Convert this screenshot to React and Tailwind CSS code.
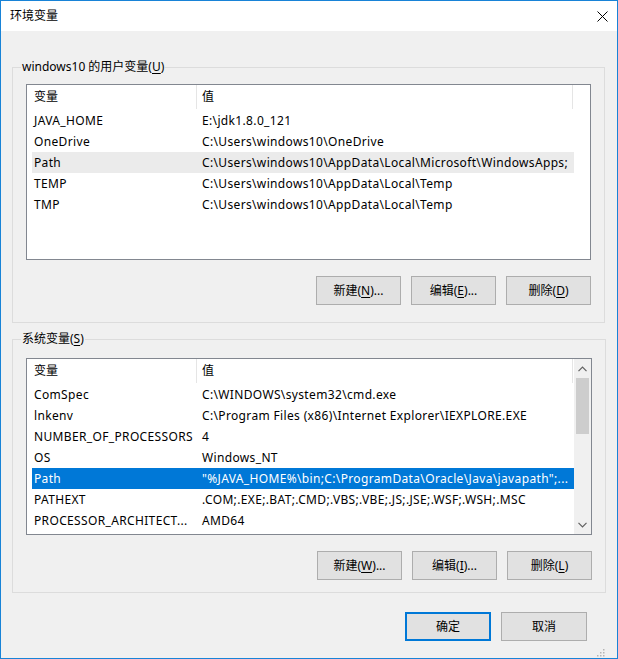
import React from "react";

const font = {
  fontFamily: '"Noto Sans", "Noto Sans CJK SC", sans-serif',
};

const userVars = [
  ["JAVA_HOME", "E:\\jdk1.8.0_121"],
  ["OneDrive", "C:\\Users\\windows10\\OneDrive"],
  ["Path", "C:\\Users\\windows10\\AppData\\Local\\Microsoft\\WindowsApps;"],
  ["TEMP", "C:\\Users\\windows10\\AppData\\Local\\Temp"],
  ["TMP", "C:\\Users\\windows10\\AppData\\Local\\Temp"],
];

const sysVars = [
  ["ComSpec", "C:\\WINDOWS\\system32\\cmd.exe"],
  ["lnkenv", "C:\\Program Files (x86)\\Internet Explorer\\IEXPLORE.EXE"],
  ["NUMBER_OF_PROCESSORS", "4"],
  ["OS", "Windows_NT"],
  ["Path", "\"%JAVA_HOME%\\bin;C:\\ProgramData\\Oracle\\Java\\javapath\";..."],
  ["PATHEXT", ".COM;.EXE;.BAT;.CMD;.VBS;.VBE;.JS;.JSE;.WSF;.WSH;.MSC"],
  ["PROCESSOR_ARCHITECT...", "AMD64"],
];

const Btn = ({ label, hot, tail = "", wide = false, primary = false }) => (
  <button
    className={`h-[29px] ${wide ? "w-[86px]" : "w-[85px]"} bg-[#e1e1e1] text-[12px] text-black ${
      primary ? "border-2 border-[#0078d7]" : "border border-[#adadad]"
    }`}
  >
    {label}
    {hot && (
      <>
        (<span className="underline underline-offset-2">{hot}</span>)
      </>
    )}
    {tail}
  </button>
);

const Header = () => (
  <div className="flex h-[24px] items-center text-[12px] text-black">
    <div className="w-[170px] pl-[7px] h-full flex items-center border-r border-[#e5e5e5]">变量</div>
    <div className="w-[376px] pl-[5px] h-full flex items-center border-r border-[#e5e5e5]">值</div>
  </div>
);

const Row = ({ name, value, state }) => (
  <div
    className={`ml-[5px] w-[542px] h-[21px] flex items-center text-[12px] tracking-[0.35px] ${
      state === "sel"
        ? "bg-[#0078d7] text-white"
        : state === "hover"
        ? "bg-[#ebebeb] text-black"
        : "text-black"
    }`}
  >
    <div className="w-[168px] pl-[2px] whitespace-nowrap overflow-hidden">{name}</div>
    <div className="pl-[2px] whitespace-nowrap">{value}</div>
  </div>
);

const Chevron = ({ down }) => (
  <svg width="9" height="6" viewBox="0 0 9 6" className="text-[#606060]">
    <path
      d={down ? "M0.5 0.8 L4.5 4.8 L8.5 0.8" : "M0.5 5.2 L4.5 1.2 L8.5 5.2"}
      fill="none"
      stroke="currentColor"
      strokeWidth="1.2"
    />
  </svg>
);

export default function App() {
  return (
    <div
      style={font}
      className="w-[618px] h-[659px] border border-[#1883d7] bg-[#f0f0f0] flex flex-col overflow-hidden"
    >
      {/* title bar */}
      <div className="h-[30px] bg-white flex items-center justify-between pl-[9px] pr-[9px] shrink-0">
        <span className="text-[12px] text-black">环境变量</span>
        <svg width="11" height="11" viewBox="0 0 11 11">
          <path d="M0.5 0.5 L10.5 10.5 M10.5 0.5 L0.5 10.5" stroke="#000" strokeWidth="1" />
        </svg>
      </div>

      <div className="flex-1 flex flex-col pl-[11px] pr-[12px] pt-[28px]">
        {/* user variables */}
        <fieldset className="border border-[#dcdcdc] px-[13px] pb-[17px] pt-[9px]">
          <legend className="ml-[-5px] px-[1px] text-[12px] leading-[16px] text-black">
            windows10 的用户变量(<span className="underline underline-offset-2">U</span>)
          </legend>
          <div className="h-[176px] bg-white border border-[#828790]">
            <Header />
            <div className="mt-px">
              {userVars.map(([n, v]) => (
                <Row key={n} name={n} value={v} state={n === "Path" ? "hover" : ""} />
              ))}
            </div>
          </div>
          <div className="mt-[16px] flex justify-end gap-[10px]">
            <Btn label="新建" hot="N" tail="..." />
            <Btn label="编辑" hot="E" tail="..." />
            <Btn label="删除" hot="D" />
          </div>
        </fieldset>

        {/* system variables */}
        <fieldset className="mt-[8px] border border-[#dcdcdc] px-[13px] pb-[12px] pt-[11px]">
          <legend className="ml-[-5px] px-[1px] text-[12px] leading-[16px] text-black">
            系统变量(<span className="underline underline-offset-2">S</span>)
          </legend>
          <div className="h-[177px] bg-white border border-[#828790] flex">
            <div className="flex-1">
              <Header />
              <div className="mt-px">
                {sysVars.map(([n, v]) => (
                  <Row key={n} name={n} value={v} state={n === "Path" ? "sel" : ""} />
                ))}
              </div>
            </div>
            <div className="w-[17px] bg-[#f0f0f0] flex flex-col items-center">
              <div className="h-[19px] flex items-center justify-center">
                <Chevron />
              </div>
              <div className="w-[13px] h-[56px] bg-[#cdcdcd]" />
              <div className="flex-1" />
              <div className="h-[19px] flex items-center justify-center">
                <Chevron down />
              </div>
            </div>
          </div>
          <div className="mt-[16px] flex justify-end gap-[10px]">
            <Btn label="新建" hot="W" tail="..." />
            <Btn label="编辑" hot="I" tail="..." />
            <Btn label="删除" hot="L" />
          </div>
        </fieldset>

        {/* dialog buttons */}
        <div className="mt-[19px] flex justify-end gap-[10px] pr-[18px]">
          <Btn label="确定" wide primary />
          <Btn label="取消" wide />
        </div>
        <div className="flex-1 flex items-end justify-end">
          <svg width="10" height="10" viewBox="0 0 10 10" className="mb-[1px]">
            {[
              [8, 2], [8, 5], [5, 5], [8, 8], [5, 8], [2, 8],
            ].map(([x, y]) => (
              <rect key={`${x}-${y}`} x={x} y={y} width="1.5" height="1.5" fill="#b5b5b5" />
            ))}
          </svg>
        </div>
      </div>
    </div>
  );
}
